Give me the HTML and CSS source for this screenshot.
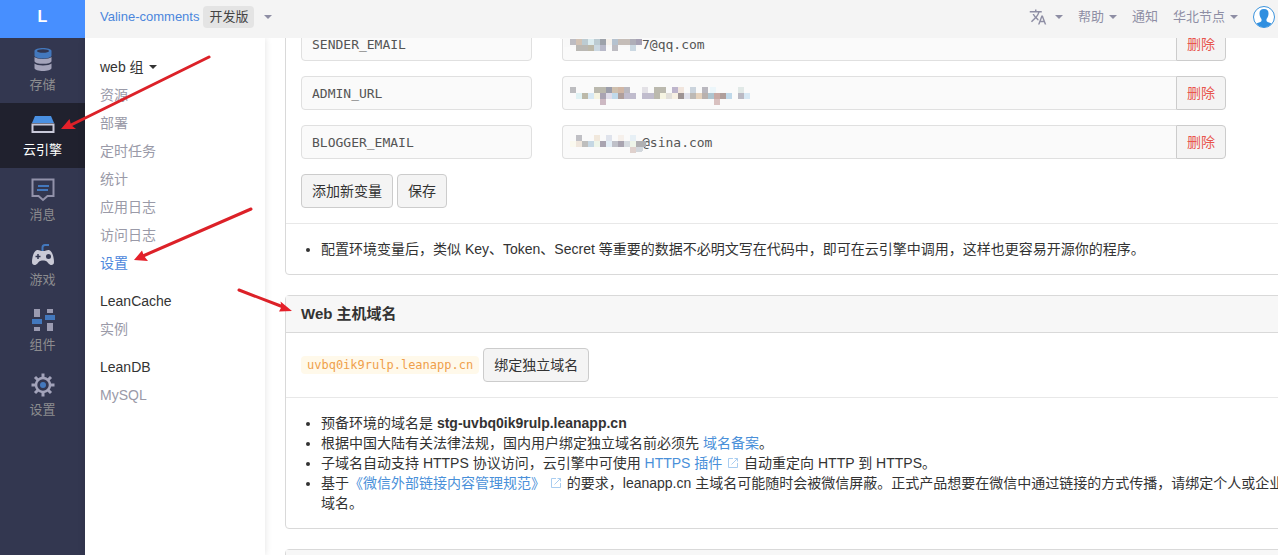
FILE: index.html
```html
<!DOCTYPE html>
<html lang="zh-CN">
<head>
<meta charset="utf-8">
<title>Valine-comments - 云引擎设置</title>
<link rel="stylesheet" href="styles.css">
</head>
<body>
<div class="app">
  <nav class="rail" aria-label="产品">
    <a class="rail-logo" href="#">L</a>
    <a class="rail-item" href="#">
      <svg class="rail-icon" viewBox="0 0 24 24"><path d="M3.500 15.500v4.500c0 4 17 4 17 0v-4.500c-2 2.500-15 2.500-17 0zM3.500 9v4c0 3.800 17 3.800 17 0v-4c-2 2.500-15 2.500-17 0z" fill="#a3a3ba"/><path d="M3.500 3v4.500c0 4 17 4 17 0V3c0-4-17-4-17 0z" fill="#4378bd"/><ellipse cx="12" cy="3" rx="6" ry="1.800" fill="#323650"/></svg>
      <span>存储</span>
    </a>
    <a class="rail-item active" href="#">
      <svg class="rail-icon" viewBox="0 0 24 24"><path d="M4 3h16l3 7H1z" fill="#4a90e2"/><path d="M1.500 11.500h21v7.500h-21z" fill="none" stroke="#c9c9d9" stroke-width="2"/></svg>
      <span>云引擎</span>
    </a>
    <a class="rail-item" href="#">
      <svg class="rail-icon" viewBox="0 0 24 24"><path d="M1.500 1.500h21v16.500h-6l-4.500 4-4.500-4h-6z" fill="none" stroke="#9292aa" stroke-width="2"/><path d="M7 8h11M6 12h11" stroke="#4378bd" stroke-width="2"/></svg>
      <span>消息</span>
    </a>
    <a class="rail-item" href="#">
      <svg class="rail-icon" viewBox="0 0 24 24"><path d="M11.500 8V4.500c0-2 1-2.500 2.500-2.500h4" fill="none" stroke="#4378bd" stroke-width="2"/><path d="M6 7c2-.5 3 1 6 1s4-1.500 6-1c3 .7 5 7 5 12 0 4-4 3.500-5.500 1.500-1.500-2-2-3-5.500-3s-4 1-5.500 3C5 22.500 1 23 1 19 1 14 3 7.700 6 7z" fill="#cacad6"/><path d="M4.500 13.500h5M7 11v5" stroke="#323650" stroke-width="1.500"/><circle cx="17.500" cy="13.500" r="2.500" fill="#323650"/></svg>
      <span>游戏</span>
    </a>
    <a class="rail-item" href="#">
      <svg class="rail-icon" viewBox="0 0 24 24"><path d="M3 1h6v8H3zM3 19h6v4H3zM16 1h6v4h-6zM16 15h6v8h-6z" fill="#9b9bb1"/><path d="M1 11h10v5H1zM14 7h10v5H14z" fill="#4378bd"/></svg>
      <span>组件</span>
    </a>
    <a class="rail-item" href="#">
      <svg class="rail-icon" viewBox="0 0 24 24"><g stroke="#a3a3ba" stroke-width="3"><path d="M12 .5v23M.5 12h23M4 4l16 16M20 4L4 20"/></g><circle cx="12" cy="12" r="7" fill="#323650" stroke="#a3a3ba" stroke-width="2.500"/><circle cx="12" cy="12" r="3" fill="#4378bd"/></svg>
      <span>设置</span>
    </a>
  </nav>

  <div class="workspace">
    <header class="topbar">
      <a class="app-name" href="#">Valine-comments</a>
      <span class="plan">开发版</span>
      <button class="menu" type="button" aria-label="切换应用"><i class="caret"></i></button>
      <div class="top-links">
        <button class="menu" type="button" aria-label="语言">
          <svg class="translate" viewBox="0 0 24 24"><path fill="currentColor" d="M12.870 15.070l-2.540-2.510.030-.030c1.740-1.940 2.980-4.170 3.710-6.530H17V4h-7V2H8v2H1v1.990h11.170C11.500 7.920 10.440 9.750 9 11.350 8.070 10.320 7.300 9.190 6.690 8h-2c.730 1.630 1.730 3.170 2.980 4.560l-5.090 5.020L4 19l5-5 3.110 3.110.760-2.040zM18.500 10h-2L12 22h2l1.120-3h4.750L21 22h2l-4.500-12zm-2.620 7l1.620-4.330L19.120 17h-3.240z"/></svg>
          <i class="caret"></i>
        </button>
        <button class="menu" type="button">帮助<i class="caret"></i></button>
        <a class="top-link" href="#">通知</a>
        <button class="menu" type="button">华北节点<i class="caret"></i></button>
        <a class="avatar" href="#" aria-label="帐号"><svg viewBox="0 0 22 22"><circle cx="11" cy="11" r="10.500" fill="#fff" stroke="#3b93dc"/><path d="M11 3c3.500 0 4.700 2 4.500 5-.2 2.500-1.200 4-2 5v2c1 1.500 4 1.500 5 2.500-4 5-11 5-15 0 1-1 4-1 5-2.500v-2c-.8-1-1.800-2.500-2-5C6.300 5 7.500 3 11 3z" fill="#2f8fe0"/></svg></a>
      </div>
    </header>

    <div class="columns">
      <nav class="subnav" aria-label="云引擎">
        <section class="nav-group">
          <button class="group-title menu" type="button">web 组<i class="caret"></i></button>
          <a href="#">资源</a>
          <a href="#">部署</a>
          <a href="#">定时任务</a>
          <a href="#">统计</a>
          <a href="#">应用日志</a>
          <a href="#">访问日志</a>
          <a class="current" href="#">设置</a>
        </section>
        <section class="nav-group">
          <div class="group-title">LeanCache</div>
          <a href="#">实例</a>
        </section>
        <section class="nav-group">
          <div class="group-title">LeanDB</div>
          <a href="#">MySQL</a>
        </section>
      </nav>

      <main class="content">
        <section class="panel scrolled">
          <form class="panel-body variables">
            <div class="variable">
              <input class="field" type="text" value="SENDER_EMAIL" aria-label="变量名">
              <div class="value">
                <input class="field masked" type="text" value="7@qq.com" aria-label="SENDER_EMAIL 的值">
                <button class="btn danger" type="button">删除</button>
                <svg class="mosaic" viewBox="0 0 200 34" shape-rendering="crispEdges"><path d="M-2 0h82v20H2v-8h-4z" fill="#f8f8f8"/><path d="M8 12h6v6H8zM50 18h6v6h-6z" fill="#bdbcc2"/><path d="M14 12h6v6h-6z" fill="#d2c2b4"/><path d="M20 12h6v6h-6zM32 12h6v6h-6z" fill="#bccbd2"/><path d="M26 12h6v6h-6z" fill="#dcecf0"/><path d="M38 12h6v6h-6z" fill="#9da2aa"/><path d="M44 12h6v6h-6z" fill="#f6f1eb"/><path d="M50 12h6v6h-6z" fill="#b5c2cf"/><path d="M56 12h6v6h-6zM62 12h6v6h-6z" fill="#c5bdb8"/><path d="M68 12h6v6h-6z" fill="#afaeb8"/><path d="M74 12h6v6h-6z" fill="#a6a1b4"/><path d="M14 18h12v6H14z" fill="#bab8b4"/><path d="M26 18h6v6h-6z" fill="#bcb8a9"/><path d="M32 18h6v6h-6zM68 18h6v6h-6z" fill="#cbd8e2"/><path d="M38 18h6v6h-6z" fill="#b8b9c9"/></svg>
              </div>
            </div>
            <div class="variable">
              <input class="field" type="text" value="ADMIN_URL" aria-label="变量名">
              <div class="value">
                <input class="field masked" type="text" value="" aria-label="ADMIN_URL 的值">
                <button class="btn danger" type="button">删除</button>
                <svg class="mosaic" viewBox="0 0 200 34" shape-rendering="crispEdges"><path d="M8 11h6v6H8z" fill="#bdbdc0"/><path d="M32 11h12v6H32zM92 11h12v6H92z" fill="#bbb9ae"/><path d="M44 11h6v6h-6z" fill="#9b9daa"/><path d="M50 11h6v6h-6z" fill="#cfc0ae"/><path d="M56 11h6v6h-6z" fill="#d0b6a5"/><path d="M62 11h6v6h-6zM140 11h6v6h-6z" fill="#bab8bf"/><path d="M80 11h6v6h-6z" fill="#e3e1e6"/><path d="M110 11h6v6h-6z" fill="#beb5cc"/><path d="M116 11h6v6h-6z" fill="#f1e5dd"/><path d="M128 11h6v6h-6z" fill="#cbd4dd"/><path d="M148 11h6v6h-6z" fill="#ecf6fa"/><path d="M176 11h6v6h-6z" fill="#e1e9e7"/><path d="M14 17h6v6h-6z" fill="#e0f2f4"/><path d="M20 17h6v6h-6z" fill="#bcb9a9"/><path d="M26 17h6v6h-6zM182 17h6v6h-6z" fill="#d7e8f4"/><path d="M32 17h6v6h-6zM98 17h6v6h-6z" fill="#f6f4e2"/><path d="M38 17h6v6h-6z" fill="#a9a3b2"/><path d="M44 17h6v6h-6z" fill="#e0ddea"/><path d="M50 17h6v6h-6zM164 17h6v6h-6z" fill="#c0d9ea"/><path d="M56 17h6v6h-6zM158 17h6v6h-6z" fill="#af9e9b"/><path d="M62 17h12v6H62zM80 17h12v6H80z" fill="#c0bccd"/><path d="M92 17h6v6h-6z" fill="#bbb9ae"/><path d="M104 17h6v6h-6z" fill="#e2dfda"/><path d="M110 17h6v6h-6z" fill="#f7f0e3"/><path d="M116 17h6v6h-6z" fill="#9d9393"/><path d="M122 17h6v6h-6z" fill="#dfe0ea"/><path d="M128 17h6v6h-6z" fill="#bdb9b5"/><path d="M134 17h6v6h-6z" fill="#e5d2bd"/><path d="M140 17h6v6h-6z" fill="#b9b1ae"/><path d="M146 17h6v6h-6z" fill="#afc5d0"/><path d="M152 17h6v6h-6z" fill="#c8aaa5"/><path d="M176 17h6v6h-6z" fill="#bab9c3"/><path d="M38 23h6v6h-6z" fill="#cdb9c3"/><path d="M152 23h6v6h-6z" fill="#d9c1c0"/></svg>
              </div>
            </div>
            <div class="variable">
              <input class="field" type="text" value="BLOGGER_EMAIL" aria-label="变量名">
              <div class="value">
                <input class="field masked" type="text" value="@sina.com" aria-label="BLOGGER_EMAIL 的值">
                <button class="btn danger" type="button">删除</button>
                <svg class="mosaic" viewBox="0 0 200 34" shape-rendering="crispEdges"><path d="M14 10h6v6h-6z" fill="#c0c0c5"/><path d="M32 10h6v6h-6z" fill="#f1e8dc"/><path d="M44 10h6v6h-6z" fill="#dfe3ec"/><path d="M56 10h6v6h-6z" fill="#f6f0eb"/><path d="M68 10h6v6h-6z" fill="#e7f0f6"/><path d="M8 16h6v6H8z" fill="#faf9ef"/><path d="M14 16h6v6h-6z" fill="#efe6dc"/><path d="M20 16h6v6h-6z" fill="#bebebd"/><path d="M26 16h6v6h-6z" fill="#c5d7e3"/><path d="M32 16h6v6h-6zM68 16h6v6h-6z" fill="#eef5e9"/><path d="M38 16h6v6h-6zM56 16h6v6h-6z" fill="#a9a4b0"/><path d="M44 16h6v6h-6z" fill="#e2edf5"/><path d="M50 16h6v6h-6z" fill="#bfc0c8"/><path d="M62 16h6v6h-6z" fill="#d6dbe0"/><path d="M74 16h10v6H74z" fill="#b0b0b2"/><path d="M68 22h6v6h-6z" fill="#dfd1cd"/><path d="M74 22h8l-2 5h-6z" fill="#d2d7dc"/></svg>
              </div>
            </div>
            <div class="actions">
              <button class="btn" type="button">添加新变量</button>
              <button class="btn" type="button">保存</button>
            </div>
          </form>
          <div class="panel-notes">
            <ul>
              <li>配置环境变量后，类似 Key、Token、Secret 等重要的数据不必明文写在代码中，即可在云引擎中调用，这样也更容易开源你的程序。</li>
            </ul>
          </div>
        </section>

        <section class="panel">
          <h2 class="panel-title">Web 主机域名</h2>
          <div class="panel-body actions">
            <code class="domain">uvbq0ik9rulp.leanapp.cn</code>
            <button class="btn" type="button">绑定独立域名</button>
          </div>
          <div class="panel-notes">
            <ul>
              <li>预备环境的域名是 <strong>stg-uvbq0ik9rulp.leanapp.cn</strong></li>
              <li>根据中国大陆有关法律法规，国内用户绑定独立域名前必须先 <a href="#">域名备案</a>。</li>
              <li>子域名自动支持 HTTPS 协议访问，云引擎中可使用 <a href="#">HTTPS 插件 <svg class="external" viewBox="0 0 12 12"><path d="M6 1.500H1.500v9h9V6M4.500 7.500l6-6M7.500 1.500h3v3"/></svg></a> 自动重定向 HTTP 到 HTTPS。</li>
              <li>基于<a href="#">《微信外部链接内容管理规范》 <svg class="external" viewBox="0 0 12 12"><path d="M6 1.500H1.500v9h9V6M4.500 7.500l6-6M7.500 1.500h3v3"/></svg></a> 的要求，leanapp.cn 主域名可能随时会被微信屏蔽。正式产品想要在微信中通过链接的方式传播，请绑定个人或企业域名。</li>
            </ul>
          </div>
        </section>

        <section class="panel">
          <h2 class="panel-title"></h2>
        </section>
      </main>
    </div>
  </div>

  <svg class="annotations" viewBox="0 0 300 320" aria-hidden="true">
    <g stroke="#dc2128" stroke-width="3" stroke-linecap="round"><path d="M209 57L70 125.500M251 209L143 256M239 290L282 306.500"/></g>
    <path d="M61 129l8.500-10 1.500 6 5 4zM134 260l8-9.500 2 5.500 4 5zM292 311l-13 .5 2.500-4.500-1-5.500z" fill="#e5202a"/>
  </svg>
</div>
</body>
</html>
```
FILE: styles.css
```css
* {
  box-sizing: border-box;
}

body {
  margin: 0;
  background: #fff;
  color: #333;
  font: 14px/20px "Liberation Sans", "Noto Sans CJK SC", sans-serif;
}

a {
  color: #4a90d9;
  text-decoration: none;
}

button,
input {
  margin: 0;
  font: inherit;
}

.app {
  position: relative;
  display: flex;
  height: 100vh;
  overflow: hidden;
}

/* Product rail */
.rail {
  flex: 0 0 85px;
  background: #333750;
}

.rail-logo {
  display: flex;
  align-items: center;
  justify-content: center;
  height: 38px;
  padding-bottom: 4px;
  background: #478fff;
  color: #fff;
  font-size: 16px;
  font-weight: bold;
}

.rail-item {
  display: flex;
  flex-direction: column;
  align-items: center;
  gap: 3px;
  padding: 10px 0 8px;
  color: #8c8c8f;
  font-size: 13px;
}

.rail-item.active {
  background: #20212e;
  color: #fff;
}

.rail-icon {
  width: 24px;
  height: 24px;
}

.workspace {
  display: flex;
  flex: 1;
  flex-direction: column;
  min-width: 0;
}

/* Top bar */
.topbar {
  z-index: 1;
  display: flex;
  flex: 0 0 38px;
  align-items: center;
  padding: 0 3px 4px 15px;
  background: #f4f4f4;
  font-size: 13px;
}

.app-name {
  color: #4b86dc;
}

.plan {
  margin: 0 5px 0 4px;
  padding: 1px 6px;
  border-radius: 4px;
  background: #e4e4e4;
  color: #444;
}

.top-links {
  display: flex;
  align-items: center;
  gap: 15px;
  margin-left: auto;
}

.menu {
  display: flex;
  align-items: center;
  padding: 0;
  border: 0;
  background: none;
  color: #8e8ea4;
}

.top-link {
  color: #8e8ea4;
}

.caret {
  margin-left: 5px;
  border-top: 4px solid;
  border-right: 4px solid transparent;
  border-left: 4px solid transparent;
}

.translate {
  width: 18px;
  height: 18px;
  margin-right: 3px;
}

.avatar,
.avatar svg {
  display: block;
  width: 22px;
  height: 22px;
}

.columns {
  display: flex;
  flex: 1;
  min-height: 0;
}

/* Section navigation */
.subnav {
  flex: 0 0 180px;
  padding: 15px;
  box-shadow: 0 0 7px rgba(0, 0, 0, 0.12);
}

.nav-group {
  margin-bottom: 10px;
}

.nav-group a,
.group-title {
  display: block;
  color: #9a9aa8;
  line-height: 28px;
}

.nav-group .group-title {
  color: #333;
}

.nav-group .menu {
  display: flex;
}

.nav-group a.current {
  color: #4b86dc;
}

/* Content: panels run past the right edge of the window */
.content {
  flex: 1;
  min-width: 0;
  margin-right: -24px;
  padding-left: 20px;
  overflow: hidden;
}

.panel {
  margin-bottom: 20px;
  border: 1px solid #d9d9d9;
  border-radius: 4px;
}

.panel.scrolled {
  margin-top: -27px;
}

.panel-title {
  min-height: 37px;
  margin: 0;
  padding: 8px 15px;
  border-bottom: 1px solid #d9d9d9;
  background: #f7f7f7;
  font-size: 15px;
  line-height: 20px;
}

.panel-body {
  padding: 15px;
}

.variables {
  display: flex;
  flex-direction: column;
  gap: 15px;
}

.variable {
  display: grid;
  grid-template-columns: 231fr 664fr;
  gap: 30px;
  margin-right: 60px;
}

.field {
  width: 100%;
  min-width: 0;
  height: 34px;
  padding: 6px 10px;
  border: 1px solid #e0e0e0;
  border-radius: 4px;
  background: #fafafa;
  color: #555;
  font: 13px/20px "DejaVu Sans Mono", monospace;
}

.value {
  position: relative;
  display: flex;
}

.value .field {
  flex: 1;
  padding-left: 79px;
  border-right: 0;
  border-radius: 4px 0 0 4px;
}

.mosaic {
  position: absolute;
  top: 0;
  left: 0;
  width: 200px;
  height: 34px;
  overflow: visible;
  pointer-events: none;
}

.btn {
  height: 34px;
  padding: 6px 10px;
  border: 1px solid #ccc;
  border-radius: 4px;
  background: #f4f4f4;
  color: #333;
  line-height: 20px;
}

.value .btn {
  flex: none;
  padding: 6px 10px;
  border-radius: 0 4px 4px 0;
}

.btn.danger {
  color: #e8554e;
}

.actions {
  display: flex;
  align-items: center;
  gap: 4px;
}

.domain {
  padding: 0 6px;
  border-radius: 4px;
  background: #fff9ea;
  color: #efa04b;
  font: 12px/18px "DejaVu Sans Mono", monospace;
}

.panel-notes {
  padding: 15px;
  border-top: 1px solid #e8e8e8;
}

.panel-notes ul {
  margin: 0;
  padding-left: 20px;
}

.external {
  width: 12px;
  height: 12px;
  margin: 0 1px;
  fill: none;
  stroke: #a9cdf0;
  vertical-align: -1px;
}

.annotations {
  position: absolute;
  z-index: 2;
  top: 0;
  left: 0;
  width: 300px;
  height: 320px;
  pointer-events: none;
}
```
